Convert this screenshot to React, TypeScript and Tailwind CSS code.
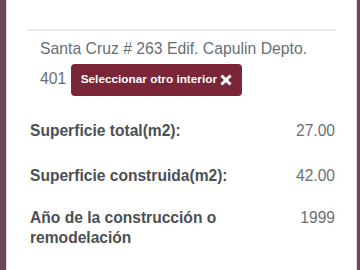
import React from "react";

const rows = [
  { label: "Superficie total(m2):", value: "27.00", mt: "mt-[25px]" },
  { label: "Superficie construida(m2):", value: "42.00", mt: "mt-[25px]" },
  { label: "Año de la construcción o remodelación", value: "1999", mt: "mt-[22px]" },
];

function TimesIcon() {
  return (
    <svg width="12" height="12" viewBox="0 0 10 10" className="ml-[3px]">
      <path d="M1.2 1.2 L8.8 8.8 M8.8 1.2 L1.2 8.8" stroke="white" strokeWidth="2.5" strokeLinecap="butt" />
    </svg>
  );
}

export default function App() {
  return (
    <div
      className="flex h-[270px] w-[360px] overflow-hidden bg-[#6e4559]"
      style={{ fontFamily: '"Liberation Sans", Arial, sans-serif' }}
    >
      <div className="ml-[6px] w-[351px] border-x border-[#e6dfe2] bg-white px-[20px]">
        <div className="mt-[29px] h-[2px] bg-[#e8e8e8]" />

        <div className="pl-[13px] pt-[3px] text-[15.75px] leading-[30px] text-[#676f74]">
          Santa Cruz # 263 Edif. Capulin Depto. 401{" "}
          <button className="inline-flex h-[32px] items-center rounded-[4px] bg-[#7a2538] px-[10px] align-top text-[11.8px] font-bold leading-none text-white">
            Seleccionar otro interior
            <TimesIcon />
          </button>
        </div>

        <div className="mt-[25px] pl-[3px] pr-[1px]">
          {rows.map((r, i) => (
            <div key={i} className={`grid grid-cols-[2fr_1fr] text-[15.6px] leading-[20px] ${i ? r.mt : ""}`}>
              <span className="font-bold text-[#4b5054]">{r.label}</span>
              <span className="text-right text-[#6b7074]">{r.value}</span>
            </div>
          ))}
        </div>
      </div>
    </div>
  );
}
